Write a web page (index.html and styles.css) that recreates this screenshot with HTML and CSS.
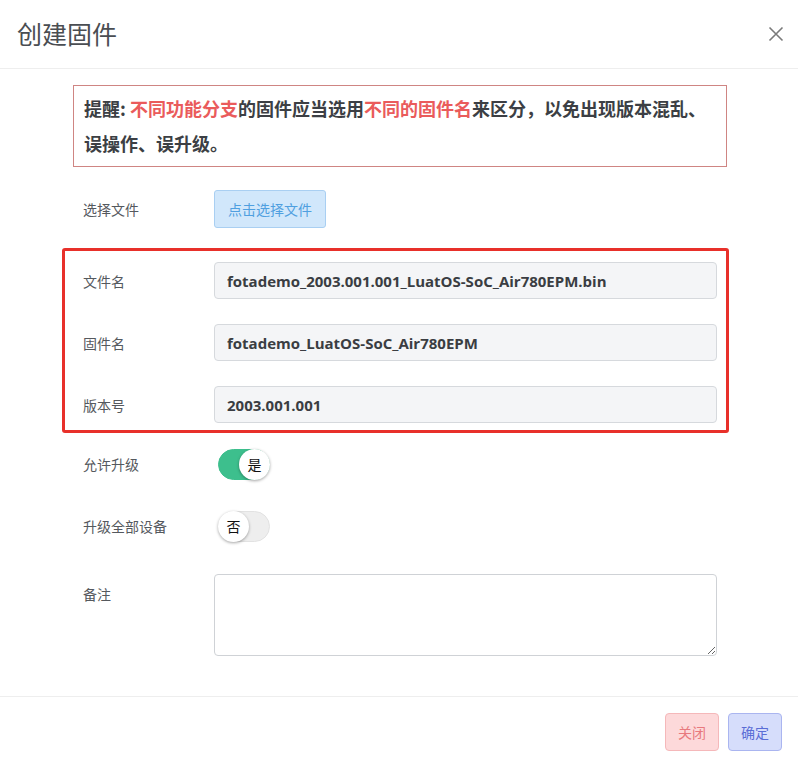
FILE: index.html
```html
<!DOCTYPE html>
<html lang="zh-CN">
<head>
    <meta charset="UTF-8">
    <meta name="viewport" content="width=device-width, initial-scale=1.0">
    <title>创建固件</title>
    <link rel="stylesheet" href="styles.css">
</head>
<body>
    <div class="modal">
        <div class="modal-header">
            <h2 class="modal-title">创建固件</h2>
            <button class="modal-close" aria-label="关闭">
                <svg width="16" height="16" viewBox="0 0 16 16">
                    <path d="M1.5 1.5 L14.5 14.5 M14.5 1.5 L1.5 14.5" stroke="#7a7a7a" stroke-width="1.6" fill="none"/>
                </svg>
            </button>
        </div>

        <div class="modal-body">
            <div class="notice">
                提醒: <span class="hl">不同功能分支</span>的固件应当选用<span class="hl">不同的固件名</span>来区分，以免出现版本混乱、误操作、误升级。
            </div>

            <div class="form-row row-file">
                <label class="form-label">选择文件</label>
                <button class="btn-file">点击选择文件</button>
            </div>

            <div class="marked">
                <div class="form-row row-input">
                    <label class="form-label">文件名</label>
                    <input class="form-input" type="text" value="fotademo_2003.001.001_LuatOS-SoC_Air780EPM.bin" readonly>
                </div>
                <div class="form-row row-input">
                    <label class="form-label">固件名</label>
                    <input class="form-input" type="text" value="fotademo_LuatOS-SoC_Air780EPM" readonly>
                </div>
                <div class="form-row row-input">
                    <label class="form-label">版本号</label>
                    <input class="form-input" type="text" value="2003.001.001" readonly>
                </div>
            </div>

            <div class="form-row row-switch">
                <label class="form-label">允许升级</label>
                <div class="switch on"><span class="knob">是</span></div>
            </div>

            <div class="form-row row-switch second">
                <label class="form-label">升级全部设备</label>
                <div class="switch"><span class="knob">否</span></div>
            </div>

            <div class="form-row row-text">
                <label class="form-label">备注</label>
                <textarea class="form-textarea"></textarea>
            </div>
        </div>

        <div class="modal-footer">
            <button class="btn btn-close">关闭</button>
            <button class="btn btn-ok">确定</button>
        </div>
    </div>
</body>
</html>
```

FILE: styles.css
```css
body {
    margin: 0;
    background: #fff;
    color: #333;
    font-family: "Open Sans", "Noto Sans CJK SC", sans-serif;
}

.modal {
    width: 798px;
    height: 766px;
    background: #fff;
}

.modal-header {
    height: 68px;
    border-bottom: 1px solid #eeeeee;
    display: flex;
    align-items: center;
    justify-content: space-between;
    padding: 0 14px 0 17px;
}

.modal-title {
    margin: 0;
    font-family: "Noto Sans CJK SC", sans-serif;
    font-size: 25px;
    font-weight: normal;
    color: #4a4d52;
    margin-top: -2px;
}

.modal-close {
    border: none;
    background: none;
    padding: 0;
    width: 16px;
    height: 16px;
    cursor: pointer;
    margin-top: -1px;
}

.modal-body {
    padding: 16px 71px 0 73px;
}

.notice {
    border: 1px solid #cf8583;
    padding: 5px 10px;
    font-family: "Noto Sans CJK SC", sans-serif;
    font-size: 18px;
    font-weight: bold;
    line-height: 35px;
    color: #3c3f44;
}

.notice .hl {
    color: #ea5b5b;
}

.form-row {
    display: flex;
    align-items: center;
    padding: 0 10px;
}

.form-label {
    width: 131px;
    flex-shrink: 0;
    font-family: "Noto Sans CJK SC", sans-serif;
    font-size: 14px;
    color: #55595e;
}

.row-file {
    margin-top: 23px;
}

.btn-file {
    height: 38px;
    padding: 0 13px;
    background: #d1e7fb;
    border: 1px solid #a9cff2;
    border-radius: 3px;
    color: #4f9fe0;
    font-family: "Noto Sans CJK SC", sans-serif;
    font-size: 14px;
}

.marked {
    position: relative;
    margin-top: 34px;
}

.marked::before {
    content: "";
    position: absolute;
    left: -11px;
    right: -2px;
    top: -14px;
    bottom: -10px;
    border: 3px solid #e8302a;
    border-radius: 3px;
    pointer-events: none;
}

.row-input + .row-input {
    margin-top: 25px;
}

.form-input {
    flex: 1;
    height: 37px;
    box-sizing: border-box;
    padding: 0 12px;
    background: #f4f5f7;
    border: 1px solid #d6d9dd;
    border-radius: 4px;
    font-family: "Open Sans", sans-serif;
    font-size: 15px;
    font-weight: bold;
    color: #3a3d42;
    outline: none;
}

.row-switch {
    margin-top: 25px;
    height: 32px;
}

.row-switch.second {
    margin-top: 30px;
}

.switch {
    width: 52px;
    height: 31px;
    margin-left: 4px;
    box-sizing: border-box;
    border-radius: 16px;
    background: #eeeeee;
    border: 1px solid #e2e2e2;
    display: flex;
    align-items: center;
    justify-content: flex-start;
}

.switch.on {
    background: #3dbf8d;
    border-color: #3dbf8d;
    justify-content: flex-end;
}

.knob {
    width: 31px;
    height: 31px;
    margin: -1px;
    border-radius: 50%;
    background: #fff;
    box-shadow: 0 1px 3px rgba(0, 0, 0, 0.35);
    display: flex;
    align-items: center;
    justify-content: center;
    font-family: "Noto Sans CJK SC", sans-serif;
    font-size: 14px;
    color: #111;
}

.row-text {
    margin-top: 32px;
    align-items: flex-start;
}

.row-text .form-label {
    padding-top: 10px;
}

.form-textarea {
    flex: 1;
    height: 82px;
    box-sizing: border-box;
    border: 1px solid #cfd2d6;
    border-radius: 4px;
    background: #fff;
    outline: none;
}

.modal-footer {
    margin-top: 40px;
    border-top: 1px solid #eeeeee;
    padding: 16px 16px 0 0;
    display: flex;
    justify-content: flex-end;
    gap: 9px;
}

.btn {
    width: 54px;
    height: 38px;
    border-radius: 4px;
    font-family: "Noto Sans CJK SC", sans-serif;
    font-size: 14px;
    padding: 0;
}

.btn-close {
    background: #fdd9da;
    border: 1px solid #f5b8ba;
    color: #e8797e;
}

.btn-ok {
    background: #d6ddfb;
    border: 1px solid #aab5f0;
    color: #5a6dd6;
}
```
